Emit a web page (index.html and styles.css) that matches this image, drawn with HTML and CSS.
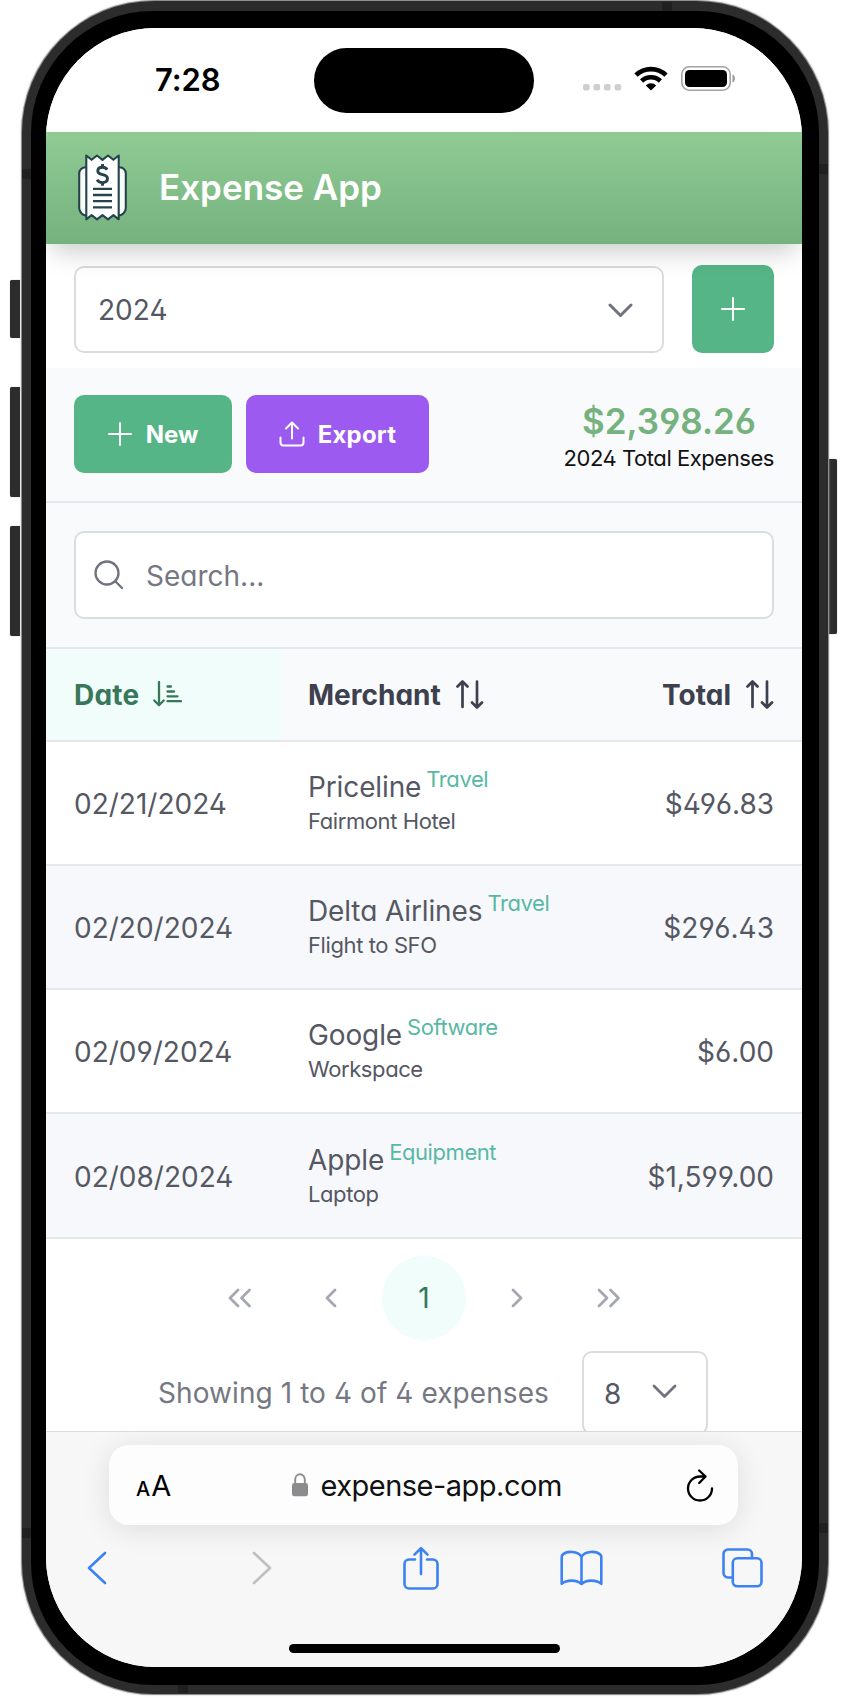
FILE: index.html
```
<!DOCTYPE html>
<html lang="en">
<head>
<meta charset="utf-8">
<title>Expense App</title>
<link rel="stylesheet" href="styles.css">
</head>
<body>
<div class="phone">
  <span class="side-button action"></span>
  <span class="side-button volume-up"></span>
  <span class="side-button volume-down"></span>
  <span class="side-button power"></span>
  <div class="frame">
    <span class="band band-top"></span><span class="band band-left-top"></span><span class="band band-right-top"></span>
    <span class="band band-left-bottom"></span><span class="band band-right-bottom"></span><span class="band band-bottom"></span>
    <div class="bezel">
      <div class="screen">
        <div class="status">
          <div class="time">7:28</div>
          <div class="island"></div>
          <div class="signals">
            <svg class="dots" width="39" height="7" viewBox="0 0 39 7" fill="#cfcfcf"><rect width="6.6" height="6.6" rx="2"/><rect x="10.5" width="6.6" height="6.6" rx="2"/><rect x="21" width="6.6" height="6.6" rx="2"/><rect x="31.6" width="6.6" height="6.6" rx="2"/></svg>
            <svg class="wifi" width="34" height="25" viewBox="0 0 34 25"><path d="M2 9.2A21.5 21.5 0 0 1 32 9.2M7.6 15A13.5 13.5 0 0 1 26.4 15" fill="none" stroke="#000" stroke-width="4.6"/><path d="M17 24.6l-5.2-5.2a7.6 7.6 0 0 1 10.4 0z"/></svg>
            <svg width="56" height="25" viewBox="0 0 56 25"><rect x=".8" y=".8" width="48.4" height="23.4" rx="7.5" fill="none" stroke="#a3a3a3" stroke-width="1.6"/><rect x="4" y="4" width="42" height="17" rx="4.5"/><path d="M51.4 8.5c3.6 1 3.6 7 0 8z" fill="#a3a3a3"/></svg>
          </div>
        </div>

        <header class="app-header">
          <svg class="logo" width="49" height="67" viewBox="0 0 49 67" stroke="#25434b" stroke-width="2.1" stroke-linejoin="round">
            <path d="M9 13.2H7.5A6.3 6.3 0 0 0 1.2 19.500V54a7.500 7.500 0 0 0 7.500 7.500H40.300a7.500 7.500 0 0 0 7.500-7.500V19.500a6.300 6.300 0 0 0-6.300-6.300H40" fill="#f8fbf8"/>
            <path d="M8.300 1.500l5.300 4.300 5.400-4.300 5.500 4.300L30 1.500l5.400 4.300 5.300-4.300v63.800l-5.300-4.100-5.400 4.100-5.500-4.100-5.500 4.100-5.400-4.100-5.300 4.100z" fill="#fff"/>
            <path d="M15 34.800h19M15 41h19M15 47.200h19M15 53.400h19" stroke-width="2.300"/>
            <path d="M29.200 15.600c-1-1.500-2.500-2.300-4.700-2.300-2.800 0-4.700 1.400-4.700 3.700 0 5.200 9.700 2.100 9.700 7.600 0 2.500-2 4-5 4-2.500 0-4.400-1.100-5.300-3M24.500 10v3.500M24.500 28.500v3.300" fill="none" stroke-width="2.900"/>
          </svg>
          <h1>Expense App</h1>
        </header>

        <main class="content">
          <div class="year-row">
            <div class="select"><span>2024</span><svg width="25" height="15" viewBox="0 0 25 15" fill="none" stroke="#70727e" stroke-width="3" stroke-linecap="round" stroke-linejoin="round"><path d="M2 2l10.500 10.500L23 2"/></svg></div>
            <div class="add"><svg width="24" height="24" viewBox="0 0 24 24" stroke="#fff" stroke-width="2" stroke-linecap="round"><path d="M12 1v22M1 12h22"/></svg></div>
          </div>

          <div class="toolbar">
            <div class="btn green"><svg width="24" height="24" viewBox="0 0 24 24" stroke="#fff" stroke-width="1.900" stroke-linecap="round"><path d="M12 1v22M1 12h22"/></svg>New</div>
            <div class="btn purple"><svg width="26" height="26" viewBox="0 0 26 26" fill="none" stroke="#fff" stroke-width="2" stroke-linecap="round" stroke-linejoin="round"><path d="M13 17.500V1.500M7 7.500l6-6 6 6M1.500 16.500v5a3 3 0 0 0 3 3h17a3 3 0 0 0 3-3v-5"/></svg>Export</div>
            <div class="total"><strong>$2,398.26</strong><span>2024 Total Expenses</span></div>
          </div>

          <div class="search-bar"><div class="search"><svg width="30" height="30" viewBox="0 0 30 30" fill="none" stroke="#70727e" stroke-width="2.300" stroke-linecap="round"><circle cx="13" cy="13" r="11.500"/><path d="M21.500 21.500l6.500 6.500"/></svg><span>Search...</span></div></div>

          <div class="row head">
            <div class="cell sorted"><span class="h-date">Date</span><svg width="29" height="26" viewBox="0 0 29 26" fill="none" stroke="#38775a" stroke-width="2.300" stroke-linecap="round" stroke-linejoin="round"><path d="M6 1v23M1.300 19.500L6 24.200l4.700-4.700M14.500 5.500h3.500M14.500 10.500H21M14.500 15.300H24.500M14.500 20.200H28"/></svg></div>
            <div class="cell"><span class="h-merchant">Merchant</span><svg width="28" height="29" viewBox="0 0 28 29" fill="none" stroke="#3d404e" stroke-width="2.700" stroke-linecap="round" stroke-linejoin="round"><path d="M6.500 27v-25.500M1.500 6.500l5-5 5 5M21 1.500v25.500M16 22.500l5 5 5-5"/></svg></div>
            <div class="cell right"><span class="h-total">Total</span><svg width="28" height="29" viewBox="0 0 28 29" fill="none" stroke="#3d404e" stroke-width="2.700" stroke-linecap="round" stroke-linejoin="round"><path d="M6.500 27v-25.500M1.500 6.500l5-5 5 5M21 1.500v25.500M16 22.500l5 5 5-5"/></svg></div>
          </div>
          <div class="row"><div class="cell date">02/21/2024</div><div class="cell merchant"><div class="name">Priceline<span class="tag">Travel</span></div><div class="note">Fairmont Hotel</div></div><div class="cell right amount">$496.83</div></div>
          <div class="row alt"><div class="cell date">02/20/2024</div><div class="cell merchant"><div class="name">Delta Airlines<span class="tag">Travel</span></div><div class="note">Flight to SFO</div></div><div class="cell right amount">$296.43</div></div>
          <div class="row"><div class="cell date">02/09/2024</div><div class="cell merchant"><div class="name">Google<span class="tag">Software</span></div><div class="note">Workspace</div></div><div class="cell right amount">$6.00</div></div>
          <div class="row alt"><div class="cell date">02/08/2024</div><div class="cell merchant"><div class="name">Apple<span class="tag">Equipment</span></div><div class="note">Laptop</div></div><div class="cell right amount">$1,599.00</div></div>

          <div class="pager">
            <span class="page first"><svg width="24" height="20" viewBox="0 0 24 20"><path d="M10 2L2 10l8 8M21.500 2l-8 8 8 8"/></svg></span>
            <span class="page"><svg width="12" height="20" viewBox="0 0 12 20"><path d="M10 2L2 10l8 8"/></svg></span>
            <span class="page current">1</span>
            <span class="page"><svg width="12" height="20" viewBox="0 0 12 20"><path d="M2 2l8 8-8 8"/></svg></span>
            <span class="page last"><svg width="24" height="20" viewBox="0 0 24 20"><path d="M2 2l8 8-8 8M13.500 2l8 8-8 8"/></svg></span>
          </div>
          <div class="page-info">
            <span class="summary">Showing 1 to 4 of 4 expenses</span>
            <div class="size"><span>8</span><svg width="25" height="15" viewBox="0 0 25 15" fill="none" stroke="#70727e" stroke-width="2.800" stroke-linecap="round" stroke-linejoin="round"><path d="M2 2l10.500 10.500L23 2"/></svg></div>
          </div>
        </main>

        <footer class="browser">
          <div class="address">
            <div class="aa"><small>A</small><span>A</span></div>
            <div class="url"><svg width="16" height="24" viewBox="0 0 16 24"><path d="M3.200 12V6.500a4.800 5.200 0 0 1 9.600 0V12" fill="none" stroke="#8c8c8e" stroke-width="1.900"/><rect y="10" width="16" height="13.300" rx="2.300" fill="#8c8c8e"/></svg><span>expense-app.com</span></div>
            <svg class="reload" width="28" height="33" viewBox="0 0 28 33" fill="none" stroke="#000" stroke-width="2.300" stroke-linecap="round" stroke-linejoin="round"><path d="M26 19.500A12 12 0 1 1 14 7.500h5.500M13.200 1.500l6.300 6-6.300 6.500"/></svg>
          </div>
          <nav class="nav">
            <svg class="back" width="20" height="34" viewBox="0 0 20 34"><path d="M18 2L2 17l16 15"/></svg>
            <svg class="forward" width="20" height="34" viewBox="0 0 20 34"><path d="M2 2l16 15L2 32"/></svg>
            <svg class="share" width="36" height="44" viewBox="0 0 36 44"><path d="M12 13.500H6A4.500 4.500 0 0 0 1.500 18v20A4.500 4.500 0 0 0 6 42.500h24a4.500 4.500 0 0 0 4.500-4.500V18a4.500 4.500 0 0 0-4.500-4.500h-6M18 28V2.200M11.500 8.700L18 2.200l6.500 6.500"/></svg>
            <svg class="book" width="43" height="36" viewBox="0 0 43 36"><path d="M21.500 6.500C18 1 7 .5 2.800 4.500c-.9.900-1.100 1.500-1.100 2.500v26.800c5-4.300 15.300-4.300 19.800.3 4.500-4.600 14.800-4.600 19.800-.3V7c0-1-.2-1.600-1.100-2.500C36 .5 25 1 21.500 6.500zV34"/></svg>
            <svg class="tabs" width="41" height="40" viewBox="0 0 41 40"><rect x="10.800" y="10.300" width="28.700" height="28" rx="4.500"/><path d="M10.500 29.500H6A4.500 4.500 0 0 1 1.500 25V6A4.500 4.500 0 0 1 6 1.500h19.500A4.500 4.500 0 0 1 30 6v4"/></svg>
          </nav>
          <div class="home"></div>
        </footer>
      </div>
    </div>
  </div>
</div>
</body>
</html>
```
FILE: styles.css
```
* { box-sizing: border-box; }
body { margin: 0; background: #fff; font-family: Inter, "Liberation Sans", sans-serif; height: 1699px; overflow: hidden; }
svg { display: block; flex: none; }

/* device shell */
.phone { position: relative; width: 850px; height: 1699px; padding: 1px 22px 0; }
.frame { position: relative; width: 806px; height: 1693px; padding: 10px 9px 9px; background: #2c2c2c; border-radius: 132px; box-shadow: 0 0 0 1px #8e8e8e, 0 0 2px 1px #bbb; }
.bezel { height: 1674px; padding: 17px 17px 18px 15px; background: #000; border-radius: 122px; }
.screen { display: flex; flex-direction: column; width: 756px; height: 1639px; overflow: hidden; background: #fff; border-radius: 110px; }
.side-button { position: absolute; left: 10px; width: 10px; background: #2c2c2c; border-radius: 2px 0 0 2px; box-shadow: 0 0 1px #777; }
.action { top: 280px; height: 58px; }
.volume-up { top: 387px; height: 110px; }
.volume-down { top: 526px; height: 110px; }
.power { left: 829px; top: 459px; height: 175px; width: 8px; border-radius: 0 2px 2px 0; }
.band { position: absolute; width: 9px; height: 10px; background: #202020; }
.band-top { left: 640px; top: 1px; height: 9px; width: 10px; }
.band-left-top { left: 0; top: 168px; }
.band-right-top { left: 797px; top: 163px; }
.band-left-bottom { left: 0; top: 1527px; }
.band-right-bottom { left: 797px; top: 1522px; }
.band-bottom { left: 156px; top: 1684px; width: 10px; height: 8px; }

/* status bar */
.status { flex: none; position: relative; z-index: 2; display: flex; height: 104px; padding: 0 20px 0 109px; background: #fff; }
.time { width: 159px; padding-top: 32px; font-size: 31px; line-height: 40px; font-weight: 600; letter-spacing: -.1px; }
.island { width: 220px; height: 65px; margin-top: 19.500px; border-radius: 33px; background: #000; }
.signals { display: flex; align-items: flex-start; padding: 38px 0 0 49px; }
.dots { margin-top: 18px; }
.wifi { margin: 0 13px 0 12px; }

.app-header { position: relative; z-index: 1; flex: none; display: flex; align-items: center; gap: 32px; height: 112px; padding: 0 32px 2px; background: linear-gradient(#90cb94, #75b27e); box-shadow: 0 14px 24px -6px rgba(0, 0, 0, .2); }
h1 { margin: 0; color: #fff; font-size: 35px; line-height: 44px; font-weight: 600; }

.content { flex: none; height: 1187px; overflow: hidden; color: #555863; font-size: 28px; font-feature-settings: "cv02", "cv03", "cv04", "cv11"; }
.year-row { display: flex; gap: 28px; height: 124px; padding: 21px 28px 15px; }
.select { flex: 1; display: flex; align-items: center; justify-content: space-between; margin-top: 1px; padding: 1px 29px 0 22px; border: 2px solid #dadde0; border-radius: 10px; }
.add { display: grid; place-items: center; width: 82px; border-radius: 10px; background: #56b586; }
.toolbar { display: flex; align-items: center; gap: 14px; height: 135px; padding: 0 28px 1px; background: #f9fafc; border-bottom: 2px solid #e5e7eb; }
.btn { display: flex; align-items: center; justify-content: center; gap: 14px; height: 78px; border-radius: 10px; color: #fff; font-size: 24px; font-weight: 700; font-feature-settings: normal; }
.green { width: 158px; background: #56b586; }
.purple { width: 183px; gap: 13px; letter-spacing: .2px; background: #9d5af0; }
.total { display: flex; flex-direction: column; align-items: flex-end; margin-left: auto; color: #111; font-size: 22px; line-height: 28px; letter-spacing: -.45px; white-space: nowrap; padding-top: 1px; }
.total strong { margin-right: 18px; color: #75b27e; font-size: 35px; line-height: 46px; font-weight: 600; letter-spacing: 0; }
.search-bar { height: 146px; padding: 28px; background: #f9fafc; border-bottom: 2px solid #e5e7eb; }
.search { display: flex; align-items: center; gap: 22px; height: 88px; padding: 0 18px; border: 2px solid #dadde0; border-radius: 10px; background: #fff; color: #757782; }
.search span { padding-top: 2px; }

/* expense table */
.row { display: grid; grid-template-columns: 234px 1fr 190px; height: 124.300px; border-bottom: 2px solid #e5e7eb; background: #fff; }
.alt { background: #f7f8fb; }
.cell { display: flex; align-items: center; padding: 2px 28px 0; white-space: nowrap; }
.right { justify-content: flex-end; }
.head { height: 92.500px; background: #f9fafc; color: #3d404e; font-weight: 700; }
.head .cell { gap: 15px; }
.head svg { margin-top: -2px; }
.head .sorted { gap: 14px; background: #f0fdfa; color: #38775a; }
.h-date { letter-spacing: .2px; }
.merchant { flex-direction: column; align-items: flex-start; justify-content: center; padding-right: 0; }
.name { line-height: 34px; letter-spacing: -.12px; }
.tag { position: relative; top: -10px; margin-left: 5px; font-size: 22px; line-height: 20px; letter-spacing: -.42px; color: #57b9a3; }
.note { font-size: 22px; line-height: 34px; letter-spacing: -.4px; }

.pager { display: flex; justify-content: center; gap: 9px; height: 102px; padding-top: 17px; }
.page { display: grid; place-items: center; width: 84px; height: 84px; border-radius: 50%; fill: none; stroke: #a5a8b0; stroke-width: 2.800; stroke-linecap: round; stroke-linejoin: round; }
.first { padding-left: 3px; }
.last { padding-right: 3px; }
.current { background: #f0fdfa; color: #38775a; }
.page-info { display: flex; align-items: center; gap: 33px; height: 88px; margin-top: 8px; padding-left: 112px; color: #757782; }
.summary { letter-spacing: .08px; }
.size { display: flex; align-items: center; justify-content: space-between; width: 126px; height: 84px; padding: 2px 29px 0 20px; border: 2px solid #dadde0; border-radius: 10px; color: #555863; }
.size svg { margin-top: -5px; }

/* browser chrome */
.browser { flex: 1; display: flex; flex-direction: column; align-items: center; padding-top: 13px; border-top: 1px solid #dcdcdc; background: #f7f7f7; }
.address { display: flex; align-items: center; justify-content: space-between; width: 629px; height: 80px; margin-right: 1px; padding: 0 24px 0 27px; border-radius: 20px; background: #fdfdfd; box-shadow: 0 4px 30px rgba(0, 0, 0, .11); }
.aa { display: flex; align-items: baseline; gap: 1px; font-size: 29px; }
.aa small { font-size: 20px; font-weight: 500; }
.url { display: flex; align-items: center; gap: 12px; margin-right: 3px; color: #111; font-size: 29px; letter-spacing: -.5px; white-space: nowrap; }
.nav { display: flex; align-items: center; align-self: flex-start; height: 44px; margin-top: 21px; padding-left: 41px; fill: none; stroke: #3c82f0; stroke-width: 2.600; stroke-linecap: round; stroke-linejoin: round; }
.forward { margin: 0 131px 0 145px; stroke: #bfbfbf; }
.book { margin: 0 119px 0 121px; }
.home { width: 271px; height: 9px; margin: 54px 0 0 1px; border-radius: 5px; background: #000; }
```
